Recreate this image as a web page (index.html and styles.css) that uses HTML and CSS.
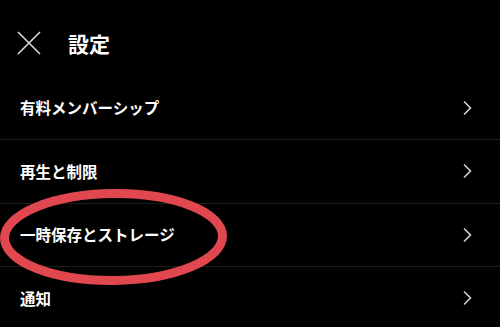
FILE: index.html
```html
<!DOCTYPE html>
<html lang="ja">
<head>
<meta charset="utf-8">
<link rel="stylesheet" href="styles.css">
</head>
<body>
<div class="screen">
  <header class="header">
    <svg class="close" width="24" height="24" viewBox="0 0 24 24"><path d="M1 1L23 23M23 1L1 23" stroke="#dcdcdc" stroke-width="1.6" fill="none"/></svg>
    <h1 class="title">設定</h1>
  </header>
  <ul class="list">
    <li class="row"><span class="label">有料メンバーシップ</span><svg class="chev" width="10" height="16" viewBox="0 0 10 16"><path d="M2 1.5L8.5 8L2 14.5" stroke="#d0d0d0" stroke-width="1.6" fill="none"/></svg></li>
    <li class="row"><span class="label">再生と制限</span><svg class="chev" width="10" height="16" viewBox="0 0 10 16"><path d="M2 1.5L8.5 8L2 14.5" stroke="#d0d0d0" stroke-width="1.6" fill="none"/></svg></li>
    <li class="row"><span class="label">一時保存とストレージ</span><svg class="chev" width="10" height="16" viewBox="0 0 10 16"><path d="M2 1.5L8.5 8L2 14.5" stroke="#d0d0d0" stroke-width="1.6" fill="none"/></svg></li>
    <li class="row"><span class="label">通知</span><svg class="chev" width="10" height="16" viewBox="0 0 10 16"><path d="M2 1.5L8.5 8L2 14.5" stroke="#d0d0d0" stroke-width="1.6" fill="none"/></svg></li>
  </ul>
  <svg class="mark" width="232" height="100" viewBox="0 0 232 100"><ellipse cx="113.5" cy="48" rx="109" ry="43.5" stroke="#e0474f" stroke-width="9" fill="none" transform="rotate(-0.6 113.5 48)"/></svg>
</div>
</body>
</html>
```
FILE: styles.css
```css
html, body {
  margin: 0;
  padding: 0;
  background: #000;
}
.screen {
  position: relative;
  width: 500px;
  height: 327px;
  overflow: hidden;
  background: #000;
  color: #fff;
  font-family: "Noto Sans CJK JP", "Noto Sans", sans-serif;
}
.header {
  display: flex;
  align-items: center;
  height: 76px;
  padding: 10px 0 0 17px;
  box-sizing: border-box;
}
.close {
  display: block;
}
.title {
  margin: 0 0 0 27px;
  font-size: 21px;
  font-weight: 700;
  line-height: 1;
}
.list {
  list-style: none;
  margin: 0;
  padding: 0;
}
.row {
  display: flex;
  align-items: center;
  justify-content: space-between;
  height: 63.5px;
  padding: 0 28px 0 20px;
  border-bottom: 1px solid #1e1e1e;
  box-sizing: border-box;
}
.row:first-child {
  height: 64px;
}
.label {
  font-size: 15.5px;
  font-weight: 700;
  line-height: 1;
}
.chev {
  display: block;
}
.mark {
  position: absolute;
  left: 0;
  top: 189px;
}
```
